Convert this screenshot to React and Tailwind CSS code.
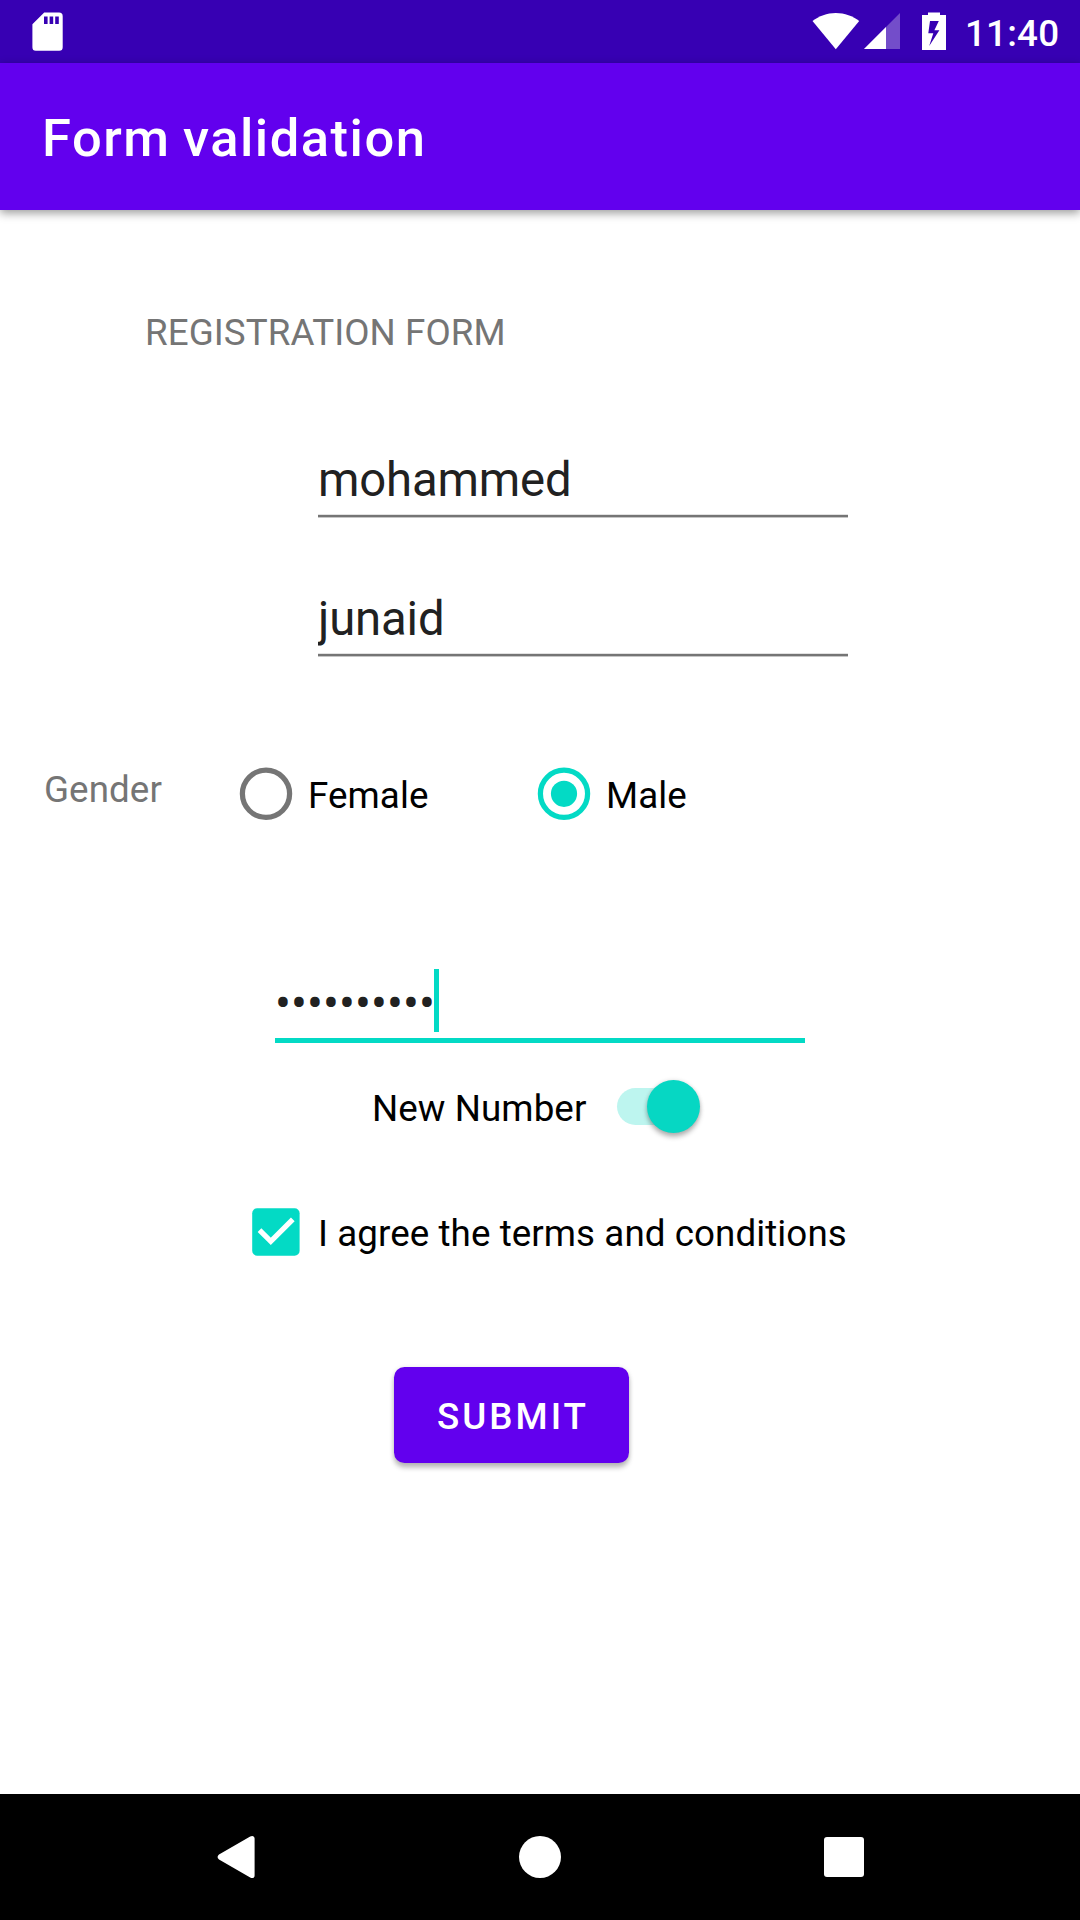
import React from "react";

function StatusBar() {
  return (
    <div className="flex h-[63px] items-start bg-[#3700b3] pl-8 text-white">
      <svg className="mt-3 h-10 w-8" viewBox="0 0 32 40" fill="currentColor">
        <path
          fillRule="evenodd"
          d="M12.2.5H27a3.7 3.7 0 0 1 3.7 3.7v31a3.5 3.5 0 0 1-3.5 3.5H4a3.5 3.5 0 0 1-3.6-3.5V12.2ZM12 4.6v7.4h3.6V4.6Zm5.6 0v7.4h3.6V4.6Zm5.6 0v7.4h3.6V4.6Z"
        />
      </svg>
      <svg className="mt-3 ml-[748px] h-10 w-12" viewBox="0 0 48 40" fill="currentColor">
        <path d="M.5 9C7 4 15 1 23.8 1S41 4 47.2 9L23.8 37.3Z" />
      </svg>
      <svg className="mt-3 ml-1 h-10 w-9" viewBox="0 0 36 40" fill="currentColor">
        <path d="M36 1v36H0Z" opacity="0.3" />
        <path d="M22 15v22H0Z" />
      </svg>
      <svg className="mt-3 ml-[22px] h-10 w-6" viewBox="0 0 24 40" fill="currentColor">
        <path
          fillRule="evenodd"
          d="M6 .4h12V3h6v35H0V3h6ZM8 9 6.3 21.3h5L7.2 34 17.4 18.2h-5L16.8 9Z"
        />
      </svg>
      <span className="mt-3 ml-[19px] text-[36.75px] leading-[44px] font-medium tracking-[0.2px]">
        11:40
      </span>
    </div>
  );
}

function AppBar() {
  return (
    <header className="flex h-[147px] items-center bg-[#6200ee] pt-[3px] pl-[42px] shadow-[0_3px_9px_rgba(0,0,0,0.4)]">
      <h1 className="text-[52.5px] leading-[62px] font-medium tracking-[1.5px] text-white [word-spacing:-2px]">
        Form validation
      </h1>
    </header>
  );
}

function Field({ value }) {
  return (
    <div className="ml-[318px] w-[530px]">
      <div className="mb-1.5 h-14 overflow-hidden text-[47.25px] leading-[56px] tracking-[-0.15px] text-[#212121]">
        {value}
      </div>
      <div className="h-1 border-t border-b border-t-[#e2e2e2] border-b-[#c6c6c6] bg-[#757575]" />
    </div>
  );
}

function Radio({ checked }) {
  return (
    <svg
      className={checked ? "h-[54px] w-[54px] text-[#03dac5]" : "h-[54px] w-[54px] text-[#757575]"}
      viewBox="0 0 54 54"
    >
      <circle cx="27" cy="26.8" r="23.6" fill="none" stroke="currentColor" strokeWidth="5.25" />
      {checked && <circle cx="27" cy="26.8" r="13.1" fill="currentColor" />}
    </svg>
  );
}

function Form() {
  return (
    <main className="flex h-[1584px] flex-col text-[36.75px] leading-[44px] tracking-[0.07px] text-black">
      <h2 className="mt-[101px] ml-[145px] text-[#757575]">REGISTRATION FORM</h2>
      <div className="mt-[97px]">
        <Field value="mohammed" />
      </div>
      <div className="mt-[73px]">
        <Field value="junaid" />
      </div>

      <div className="mt-[110px] flex items-start pl-11">
        <span className="mt-px w-[195px] text-[#757575]">Gender</span>
        <label className="flex w-[298px] items-start">
          <Radio />
          <span className="mt-[7px] ml-[15px]">Female</span>
        </label>
        <label className="flex items-start">
          <Radio checked />
          <span className="mt-[7px] ml-[15px]">Male</span>
        </label>
      </div>

      <div className="mt-[148px] ml-[275px] w-[530px]">
        <div className="flex h-[69px] items-start">
          <span className="mt-[7px] w-[159px] text-[47.25px] leading-[56px] whitespace-nowrap text-[#212121]">
            ••••••••••
          </span>
          <span className="h-[63px] w-[5px] bg-[#03dac5]" />
        </div>
        <div className="h-[5px] bg-[#03dac5]" />
      </div>

      <div className="mt-[37px] flex h-[53px] items-start pl-[372px]">
        <span className="mt-[7px] w-[245px]">New Number</span>
        <span className="mt-2 flex h-[37px] w-[80px] items-center rounded-full bg-[#bdf5ef]">
          <span className="-mr-[3px] ml-auto h-[53px] w-[53px] shrink-0 rounded-full bg-[#06d7c3] shadow-[0_4px_5px_rgba(0,0,0,0.28),0_0_4px_rgba(0,0,0,0.12)]" />
        </span>
      </div>

      <label className="mt-[67px] flex h-[63px] items-start pl-[244px]">
        <svg className="h-[64px] w-[64px]" viewBox="0 0 64 64">
          <rect x="8.2" y="8.2" width="47.4" height="47.6" rx="5" fill="#03dac5" />
          <path d="m15.5 30.2 11.3 11.2 22-22" fill="none" stroke="#fff" strokeWidth="5.2" />
        </svg>
        <span className="mt-3 ml-[10px]">I agree the terms and conditions</span>
      </label>

      <button className="mt-[104px] ml-[394px] h-24 w-[235px] rounded-[10.5px] bg-[#6200ee] pt-[3px] pl-[3px] text-center font-medium tracking-[3px] text-white shadow-[0_5px_5px_rgba(0,0,0,0.22),0_1px_5px_rgba(0,0,0,0.15)]">
        SUBMIT
      </button>
    </main>
  );
}

function NavBar() {
  return (
    <nav className="flex h-[126px] items-center bg-black pl-[216px] text-white">
      <svg className="h-11 w-10" viewBox="0 0 40 44" fill="currentColor">
        <path d="M34.2 1.5c2-1.3 4.4-.5 4.4 2v37c0 2.5-2.4 3.3-4.4 2L3 24.5c-1.9-1.3-1.9-3.7 0-5Z" />
      </svg>
      <span className="ml-[263px] h-[42px] w-[42px] rounded-full bg-white" />
      <span className="ml-[263px] h-10 w-10 rounded-[3px] bg-white" />
    </nav>
  );
}

export default function App() {
  return (
    <div className="h-[1920px] w-[1080px] overflow-hidden bg-white font-['Roboto',sans-serif]">
      <StatusBar />
      <AppBar />
      <Form />
      <NavBar />
    </div>
  );
}
